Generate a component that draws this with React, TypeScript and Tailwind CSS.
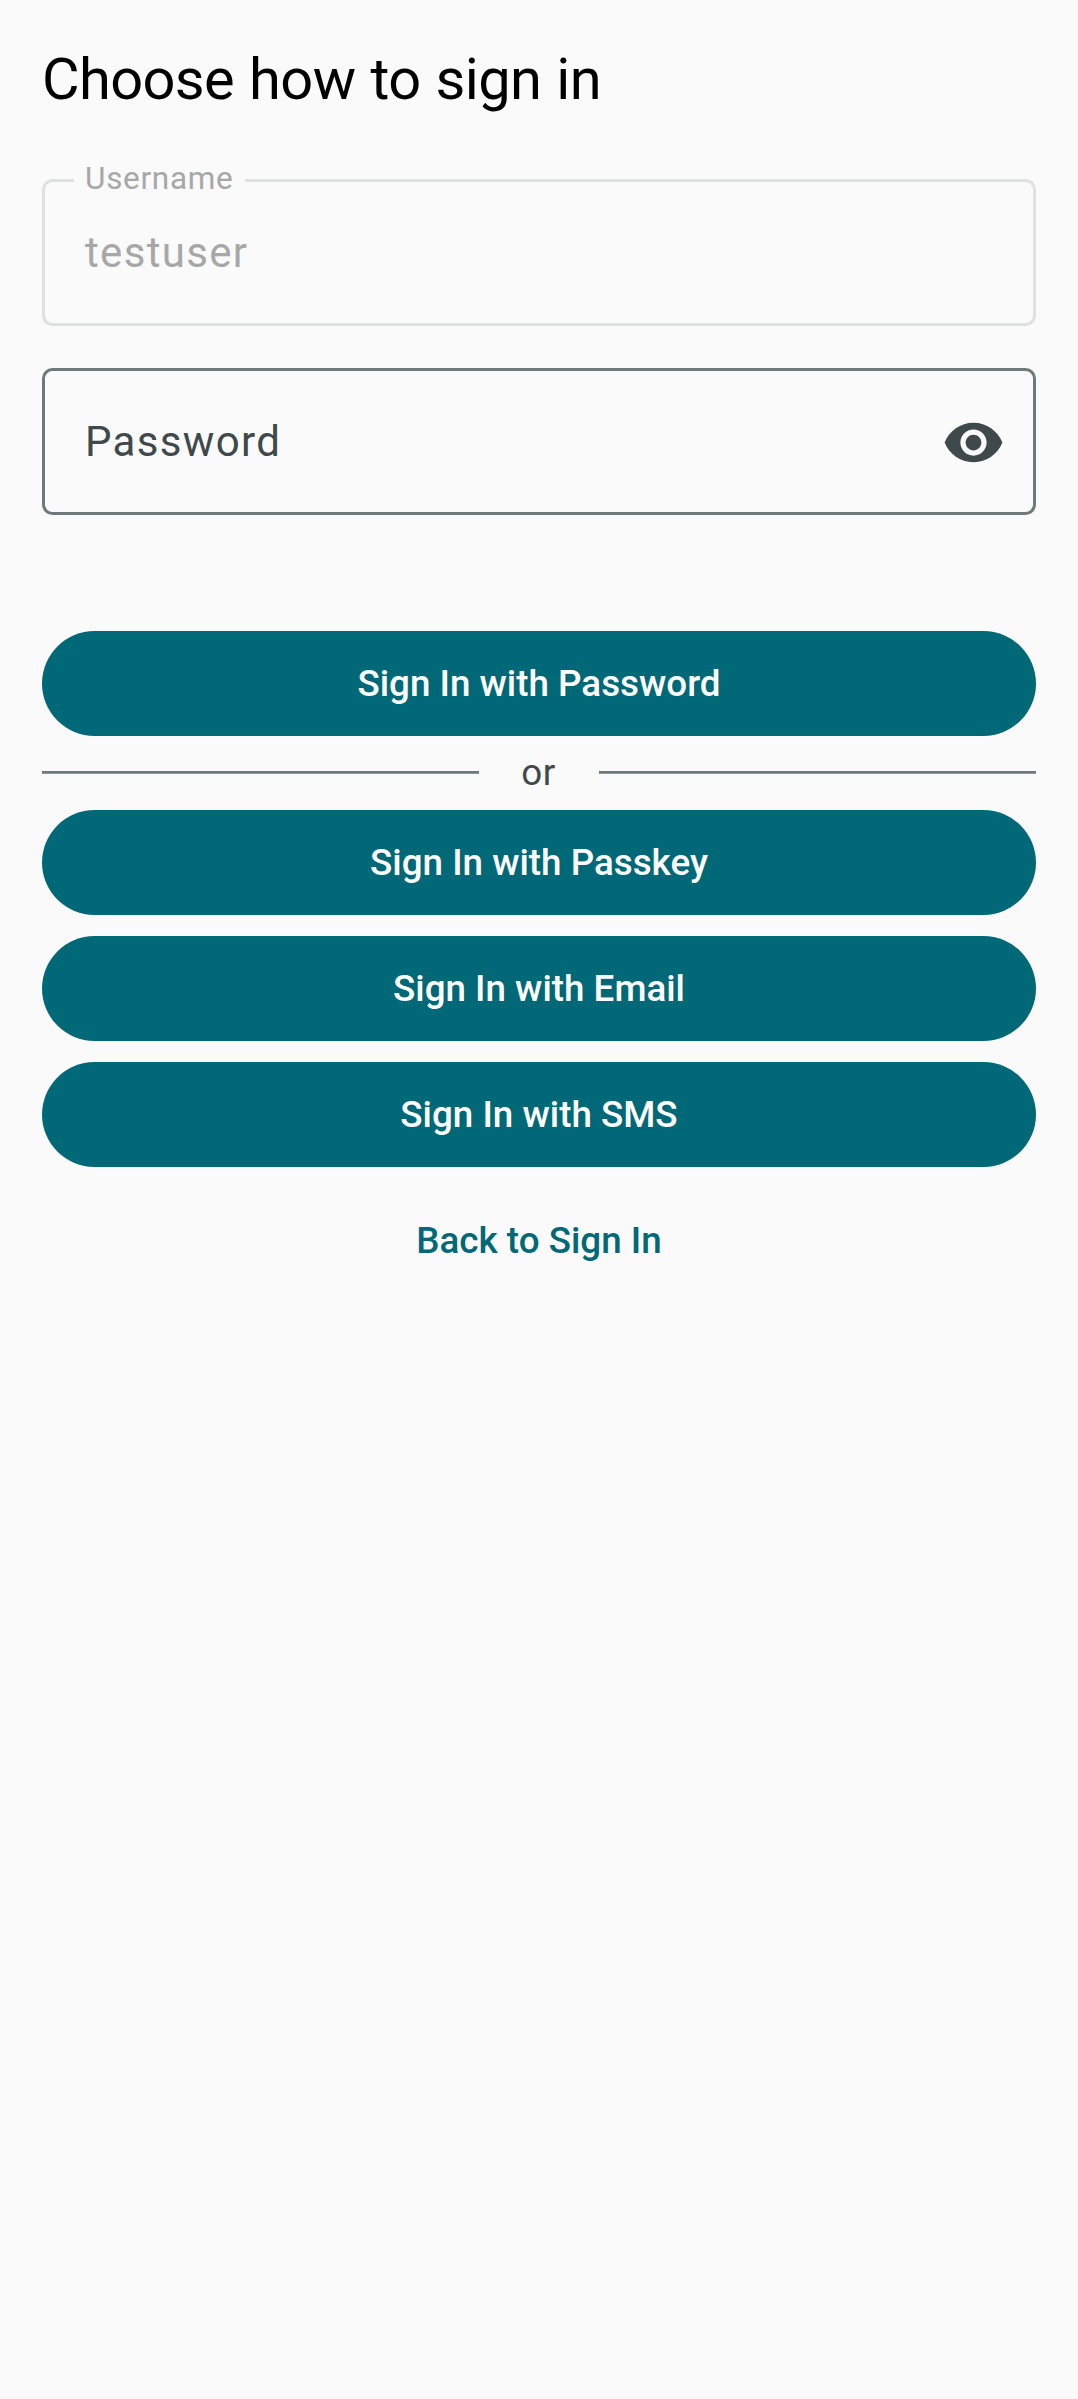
function EyeIcon() {
  return (
    <svg viewBox="0 0 24 24" className="mt-[2px] size-[63px] fill-[#3f484a]">
      <path d="M12 4.5C7 4.5 2.73 7.61 1 12c1.73 4.39 6 7.5 11 7.5s9.27-3.11 11-7.5c-1.73-4.39-6-7.5-11-7.5zM12 17c-2.76 0-5-2.24-5-5s2.24-5 5-5 5 2.24 5 5-2.24 5-5 5zm0-8c-1.66 0-3 1.34-3 3s1.34 3 3 3 3-1.34 3-3-1.34-3-3-3z" />
    </svg>
  );
}

function FilledButton({ label }: { label: string }) {
  return (
    <button className="flex h-[105px] w-full items-center justify-center rounded-full bg-[#006876] pt-[1px] text-[36.75px] leading-[52px] font-medium tracking-[0.01px] text-white">
      {label}
    </button>
  );
}

export default function App() {
  return (
    <main className="flex min-h-[2399px] w-full flex-col bg-[#fafafa] px-[42px] font-[Roboto,sans-serif]">
      <h1 className="mt-[37px] h-[84px] text-[57.75px] leading-[84px] tracking-[-0.6px] text-black [word-spacing:1.3px]">
        Choose how to sign in
      </h1>
      <div className="relative mt-[58px] flex h-[147px] items-center rounded-[10.5px] border-[3px] border-[#dfe0e0] px-[40px] text-[42px] tracking-[1.3125px] text-[#a6a8a8]">
        <span className="absolute -top-[24px] left-[29px] bg-[#fafafa] pr-[11px] pl-[11px] text-[31.5px] leading-[42px] tracking-[0.7px]">
          Username
        </span>
        testuser
      </div>
      <div className="mt-[42px] flex h-[147px] items-center justify-between rounded-[10.5px] border-[3px] border-[#6f797b] pr-[28px] pl-[40px] text-[42px] tracking-[1.35px] text-[#3f484a]">
        Password
        <EyeIcon />
      </div>
      <div className="mt-[116px]">
        <FilledButton label="Sign In with Password" />
      </div>
      <div className="flex h-[74px] text-[36.75px] leading-[74px] tracking-[0.65px] text-[#3f484a]">
        <span className="mt-[35px] h-[3px] flex-1 border-b border-[#8c9496] bg-[#6f797b]" />
        <span className="w-[120px] pr-[1px] text-center">or</span>
        <span className="mt-[35px] h-[3px] flex-1 border-b border-[#8c9496] bg-[#6f797b]" />
      </div>
      <div className="flex flex-col gap-[21px]">
        <FilledButton label="Sign In with Passkey" />
        <FilledButton label="Sign In with Email" />
        <FilledButton label="Sign In with SMS" />
        <button className="flex h-[105px] items-center justify-center pt-[1px] text-[36.75px] leading-[52px] font-medium tracking-[0.01px] text-[#006876]">
          Back to Sign In
        </button>
      </div>
    </main>
  );
}
